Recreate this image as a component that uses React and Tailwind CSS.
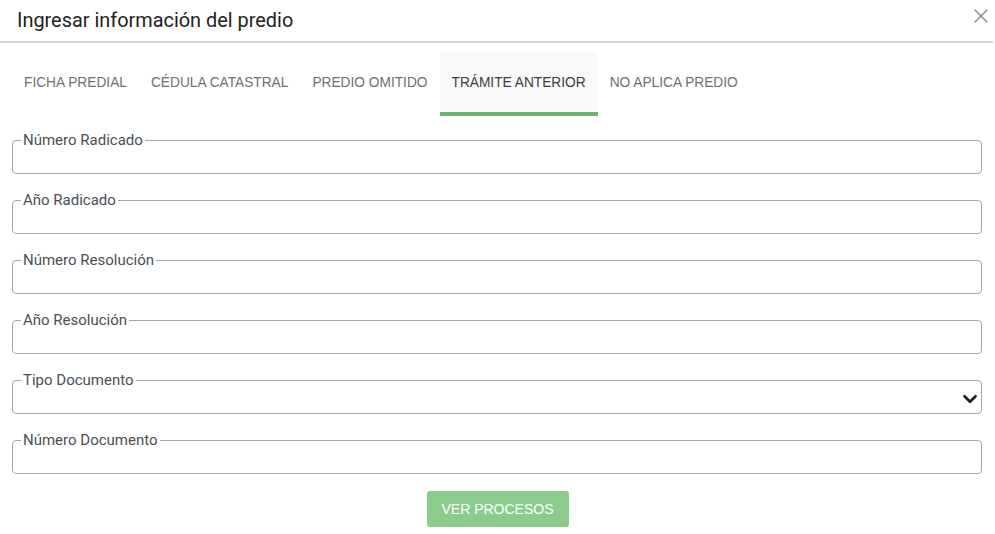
import React, { useState } from 'react';
import { X, ChevronDown } from 'lucide-react';

const tabs = ['FICHA PREDIAL', 'CÉDULA CATASTRAL', 'PREDIO OMITIDO', 'TRÁMITE ANTERIOR', 'NO APLICA PREDIO'];

const fields = [
  { label: 'Número Radicado' },
  { label: 'Año Radicado' },
  { label: 'Número Resolución' },
  { label: 'Año Resolución' },
  { label: 'Tipo Documento', select: true },
  { label: 'Número Documento' },
];

// Outlined field with the label notched into the top border
const Field = ({ label, select }) => (
  <fieldset className="relative border border-[#a3a6ab] rounded-[4px] px-[8px] h-[43px] m-0 min-w-0">
    <legend className="px-[2px] text-[15px] leading-[18px] text-[#4a4f55] font-['Roboto',sans-serif]">{label}</legend>
    {select ? (
      <div className="absolute right-[0px] top-[-1px] text-[#1f2328]">
        <ChevronDown size={22} strokeWidth={3} />
      </div>
    ) : null}
  </fieldset>
);

const App = () => {
  const [active, setActive] = useState(3);

  return (
    <div className="w-[995px] h-[534px] bg-white overflow-hidden font-['Liberation_Sans',Arial,sans-serif]">
      {/* Modal header */}
      <div className="h-[43px] flex items-center justify-between pl-[17px] pr-0 border-b-2 border-[#d2d2d2] mr-[2px]">
        <h2 className="text-[19.9px] text-[#222] font-['Roboto',sans-serif]">Ingresar información del predio</h2>
        <div className="self-start mt-[4px] text-[#8a8d91]">
          <X size={24} strokeWidth={1.5} />
        </div>
      </div>

      {/* Tabs */}
      <div className="flex pl-[12px] pt-[9px]">
        {tabs.map((t, i) => (
          <button
            key={t}
            onClick={() => setActive(i)}
            className={`h-[64px] px-[12px] text-[13.72px] pt-[3px] border-b-4 ${
              i === active ? 'bg-[#f9f9f9] text-[#3d3d3d] border-[#6ab56d]' : 'text-[#707070] border-transparent'
            }`}
          >
            {t}
          </button>
        ))}
      </div>

      {/* Form */}
      <div className="px-[12px] pt-[15px] flex flex-col gap-[17px] mr-[1px]">
        {fields.map((f) => (
          <Field key={f.label} label={f.label} select={f.select} />
        ))}
      </div>

      <div className="flex justify-center pt-[17px]">
        <button className="w-[142px] h-[36px] rounded-[3px] bg-[#8bcb8c] text-white text-[14px]">VER PROCESOS</button>
      </div>
    </div>
  );
};

export default App;
